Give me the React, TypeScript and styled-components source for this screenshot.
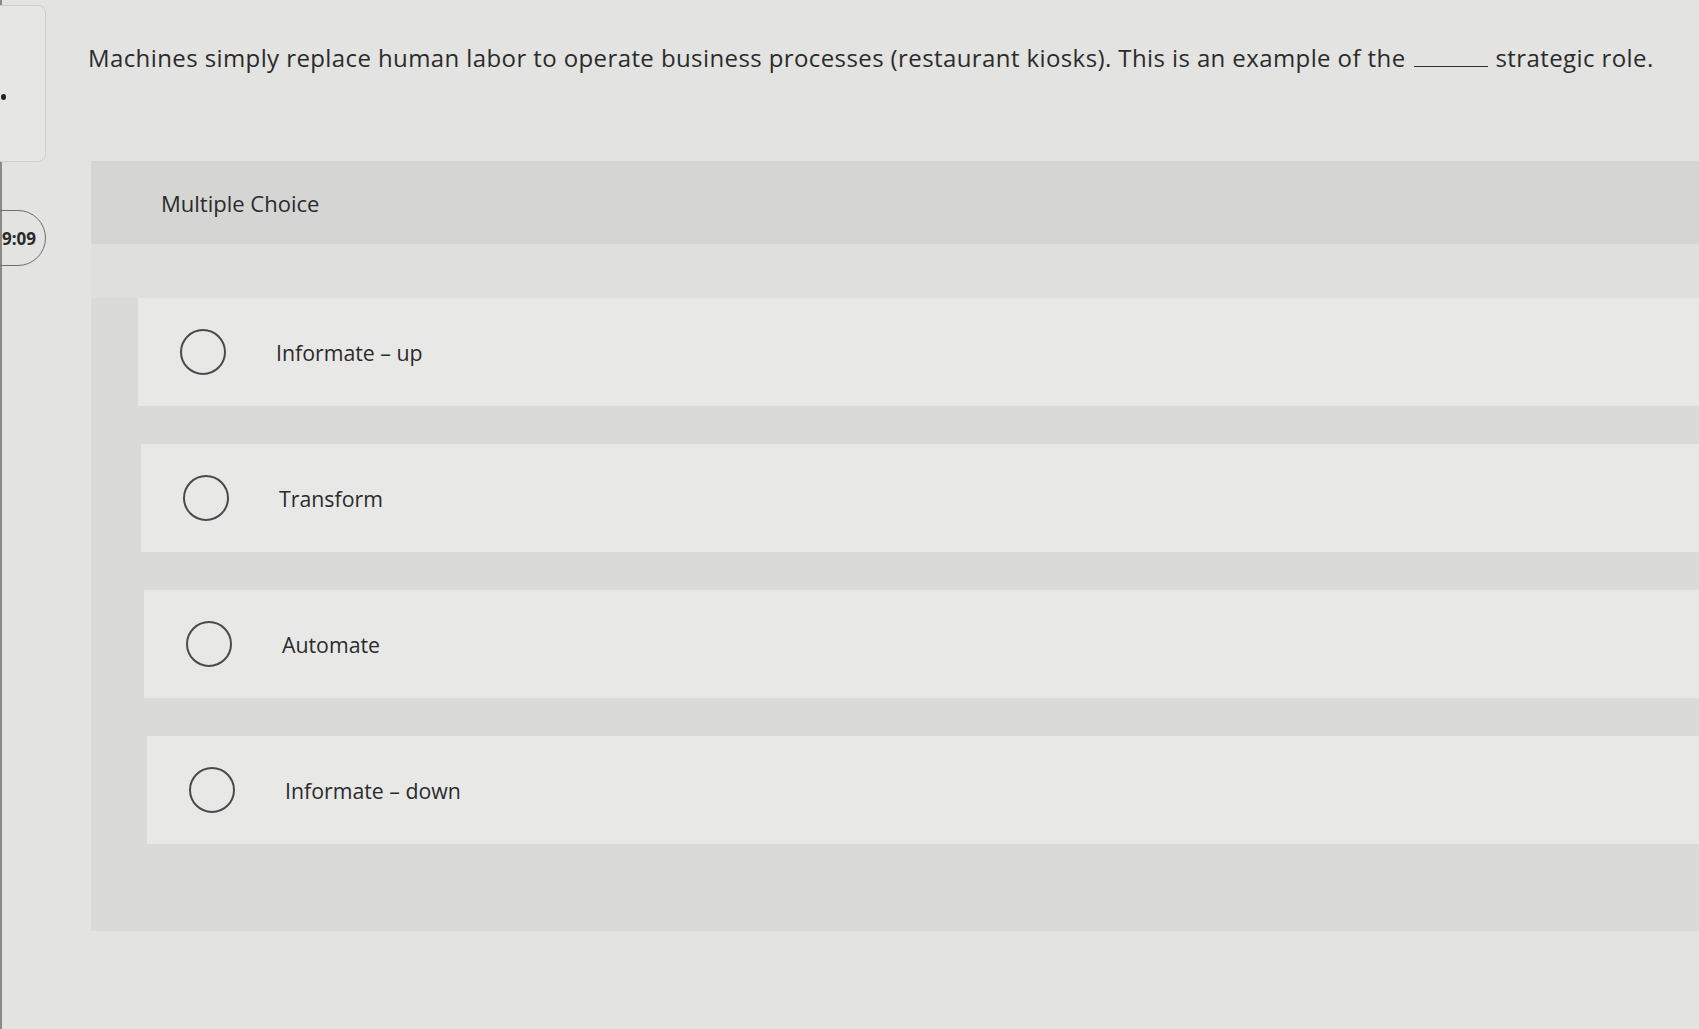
import React, { FC } from 'react';
import styled, { createGlobalStyle } from 'styled-components';

const GlobalStyle = createGlobalStyle`
  html, body {
    margin: 0;
    padding: 0;
    background-color: #e3e3e1;
    overflow: hidden;
  }
  body {
    font-family: "Open Sans", Lato, Arial, sans-serif;
    color: #2b2b2c;
  }
`;

const Page = styled.div`
  display: flex;
  width: 1699px;
  height: 1029px;
  background-color: #e3e3e1;
  border-left: 2px solid #8a8a8a;
  box-sizing: border-box;
`;

const Rail = styled.aside`
  width: 44px;
  flex-shrink: 0;
  display: flex;
  flex-direction: column;
  padding-top: 5px;
`;

const RailCard = styled.div`
  position: relative;
  height: 155px;
  margin-left: -12px;
  border: 1px solid #cfcfcd;
  border-radius: 8px;
  background-color: #e6e6e4;
`;

const RailDot = styled.span`
  position: absolute;
  left: 10px;
  top: 88px;
  width: 5px;
  height: 6px;
  border-radius: 50%;
  background-color: #222;
`;

const TimerPill = styled.div`
  margin-top: 48px;
  margin-left: -30px;
  height: 54px;
  border: 1.5px solid #6d6d6d;
  border-radius: 28px;
  display: flex;
  align-items: center;
  justify-content: flex-end;
  padding-right: 9px;
  font-size: 17px;
  font-weight: 700;
  color: #2a2a2a;
`;

const Main = styled.main`
  flex: 1;
  padding-left: 42px;
  padding-top: 42px;
  display: flex;
  flex-direction: column;
`;

const Question = styled.p`
  margin: 0;
  font-size: 24px;
  letter-spacing: 0.4px;
  line-height: 32px;
  white-space: nowrap;
  color: #2b2b2c;
`;

const Blank = styled.span`
  display: inline-block;
  width: 74px;
  margin: 0 8px 0 8px;
  border-bottom: 1.5px solid #333;
  vertical-align: baseline;
`;

const Panel = styled.section`
  margin-top: 87px;
  margin-left: 3px;
  margin-right: -30px;
  background-color: #dbdbda;
`;

const PanelHeader = styled.header`
  height: 83px;
  display: flex;
  align-items: center;
  padding-left: 70px;
  background-color: #d5d5d4;
  font-size: 22px;
  color: #2b2b2c;
`;

const Choices = styled.div`
  display: flex;
  flex-direction: column;
  gap: 38px;
  padding: 54px 0 87px 47px;
  background: linear-gradient(#dfdfde 0, #dfdfde 54px, #dadad9 54px);
`;

const ChoiceCard = styled.label<{ $shift: number }>`
  height: 108px;
  display: flex;
  align-items: center;
  gap: 50px;
  margin-left: ${p => p.$shift}px;
  padding-left: 42px;
  background-color: #e8e8e7;
  cursor: pointer;
`;

const Radio = styled.span`
  width: 42px;
  height: 42px;
  flex-shrink: 0;
  border: 2px solid #4a4a4c;
  border-radius: 50%;
`;

const ChoiceText = styled.span`
  font-size: 21.3px;
  color: #2b2b2c;
`;

const choices = ['Informate – up', 'Transform', 'Automate', 'Informate – down'];

const App: FC = () => {
  return (
    <>
      <GlobalStyle />
      <Page>
        <Rail>
          <RailCard>
            <RailDot />
          </RailCard>
          <TimerPill>9:09</TimerPill>
        </Rail>

        <Main>
          <Question>
            Machines simply replace human labor to operate business processes (restaurant kiosks). This is an example of the
            <Blank />
            strategic role.
          </Question>

          <Panel>
            <PanelHeader>Multiple Choice</PanelHeader>
            <Choices>
              {choices.map((choice, i) => (
                <ChoiceCard key={choice} $shift={i * 3}>
                  <Radio />
                  <ChoiceText>{choice}</ChoiceText>
                </ChoiceCard>
              ))}
            </Choices>
          </Panel>
        </Main>
      </Page>
    </>
  );
};

export default App;
